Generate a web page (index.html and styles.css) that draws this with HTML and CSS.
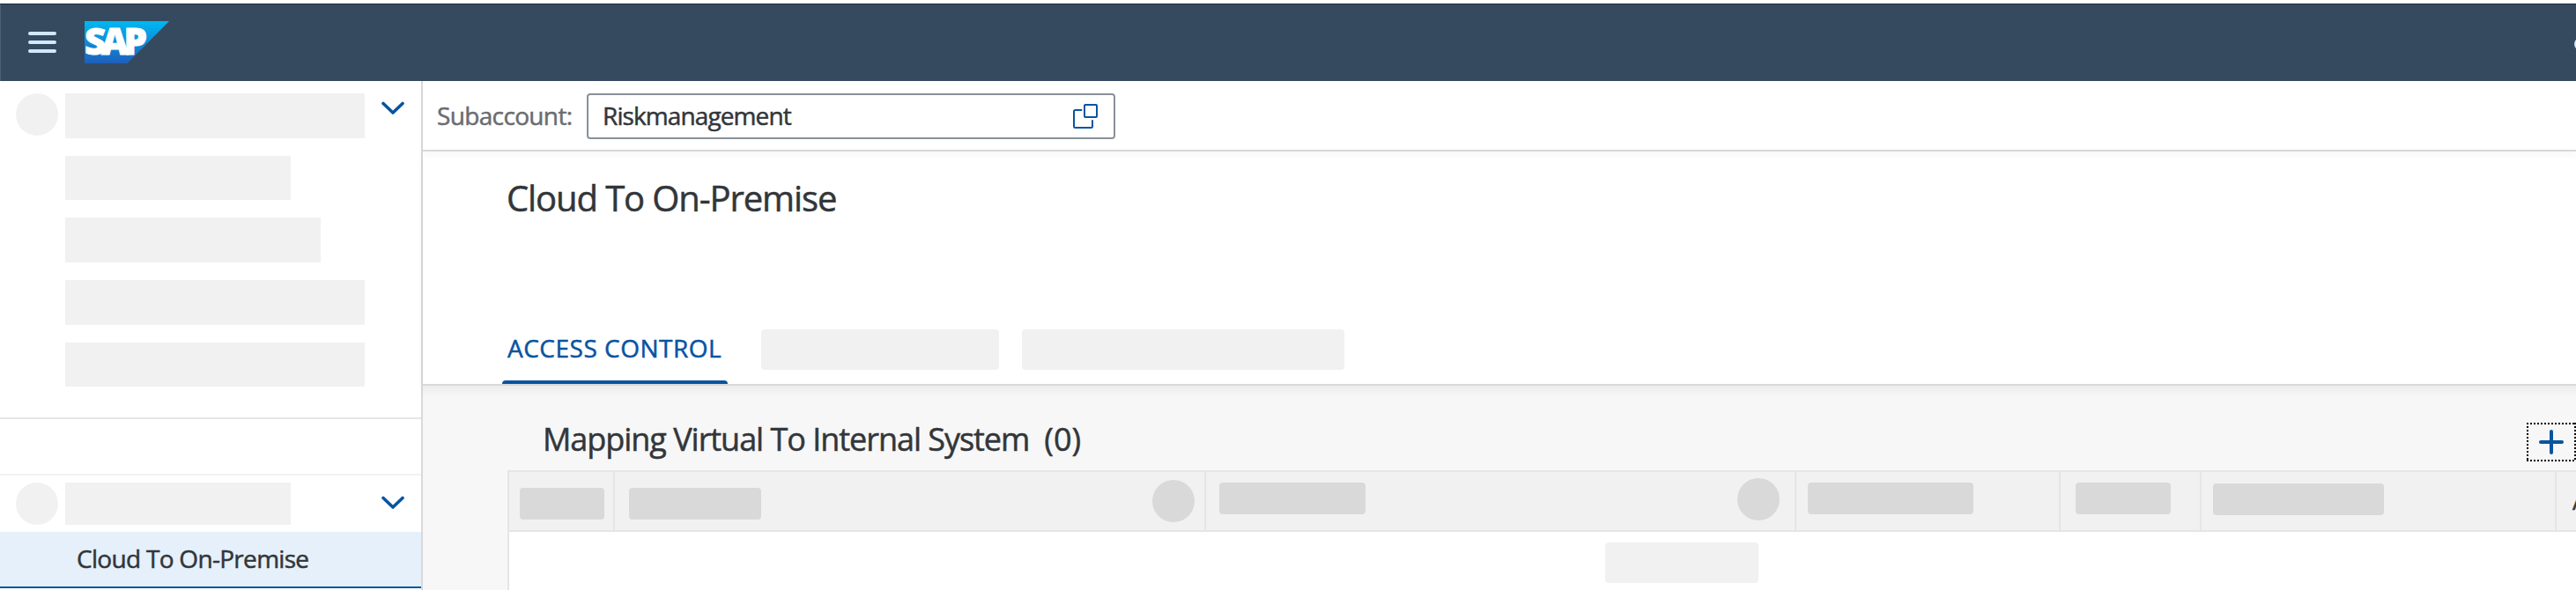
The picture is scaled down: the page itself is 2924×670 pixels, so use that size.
FILE: index.html
```html
<!DOCTYPE html>
<html lang="en">
<head>
<meta charset="utf-8">
<title>Cloud To On-Premise</title>
<link rel="stylesheet" href="styles.css">
</head>
<body>
<div class="app">
  <header class="shell">
    <svg class="menu" width="32" height="24" viewBox="0 0 32 24"><path d="M2 2H30M2 12H30M2 22H30" stroke="#d1e8ff" stroke-width="4" stroke-linecap="round"/></svg>
    <svg class="logo" width="96" height="48" viewBox="0 0 96 48">
      <defs><linearGradient id="sap" x1="0" y1="0" x2="0" y2="1"><stop offset="0" stop-color="#00b8f1"/><stop offset=".5" stop-color="#0d8ddb"/><stop offset="1" stop-color="#1e5fbb"/></linearGradient></defs>
      <path d="M0 0H96L48.500 48H0Z" fill="url(#sap)"/>
      <text class="logo-text" x="0" y="38" textLength="71" lengthAdjust="spacing">SAP</text>
    </svg>
    <span class="shell-action"></span>
  </header>
  <div class="body">
    <nav class="side">
      <div class="group">
        <span class="dot"></span>
        <div class="bars"><i class="bar w340"></i><i class="bar w256"></i><i class="bar w290"></i><i class="bar w340"></i><i class="bar w340"></i></div>
        <svg class="chev chev-top" width="26" height="16" viewBox="0 0 26 16"><path d="M2 2.500L13 13L24 2.500" fill="none" stroke="#0854a0" stroke-width="3.600" stroke-linecap="round" stroke-linejoin="round"/></svg>
      </div>
      <div class="gap"></div>
      <div class="group second">
        <span class="dot"></span>
        <div class="bars"><i class="bar short w256"></i></div>
        <svg class="chev chev-low" width="26" height="16" viewBox="0 0 26 16"><path d="M2 2.500L13 13L24 2.500" fill="none" stroke="#0854a0" stroke-width="3.600" stroke-linecap="round" stroke-linejoin="round"/></svg>
      </div>
      <div class="selected">Cloud To On-Premise</div>
    </nav>
    <main class="main">
      <div class="subbar">
        <label class="label">Subaccount:</label>
        <div class="input"><span class="value">Riskmanagement</span>
          <svg width="30" height="30" viewBox="0 0 30 30" fill="none" stroke="#0854a0" stroke-width="2" stroke-linecap="round"><rect x="14" y="2" width="14" height="14" rx="1"/><path d="M10.500 8H3.500Q2 8 2 9.500V26.500Q2 28 3.500 28H21.500Q23 28 23 26.500V20"/></svg>
        </div>
      </div>
      <div class="head">
        <h1 class="title">Cloud To On-Premise</h1>
        <div class="tabs"><div class="tab">ACCESS CONTROL</div><i class="ph tab-a"></i><i class="ph tab-b"></i></div>
      </div>
      <section class="content">
        <div class="toolbar">
          <h2 class="heading"><span>Mapping Virtual To Internal System</span><span class="count">(0)</span></h2>
          <svg class="add" width="56" height="44" viewBox="0 0 56 44"><path d="M0 1H56M0 43H56M1 0V44M55 0V44" stroke="#000" stroke-width="2" stroke-dasharray="2 2" shape-rendering="crispEdges"/><path d="M16 22H40M28 10V34" stroke="#0854a0" stroke-width="4" stroke-linecap="round"/></svg>
        </div>
        <div class="table">
          <div class="row">
            <div class="cell c1"><i class="ph dark w96"></i></div>
            <div class="cell c2"><i class="ph dark w150"></i><i class="round"></i></div>
            <div class="cell c3"><i class="ph dark w166"></i><i class="round up"></i></div>
            <div class="cell c4"><i class="ph dark w188"></i></div>
            <div class="cell c5"><i class="ph dark w108"></i></div>
            <div class="cell c6"><i class="ph dark w194"></i></div>
            <div class="cell c7">A</div>
          </div>
          <div class="empty"><i class="ph w174"></i></div>
        </div>
      </section>
    </main>
  </div>
</div>
</body>
</html>
```
FILE: styles.css
```css
* { box-sizing: border-box; }
body { margin: 0; background: #fff; color: #32363a; font: 28px "Open Sans", sans-serif; -webkit-text-stroke: .5px; overflow: hidden; }
i { display: block; }
svg { display: block; flex: none; }
.app { display: flex; flex-direction: column; width: 2924px; height: 670px; overflow: hidden; padding-top: 4px; }

.shell { display: flex; flex: none; height: 88px; padding: 20px 0 0 32px; background: #354a5f; border-top: 1px solid #1b2d42; box-shadow: inset 1px 0 #4a6079; }
.menu { margin-top: 11px; }
.logo { margin: -1px 0 0 32px; overflow: visible; }
.logo-text { font: 800 42px "Open Sans", sans-serif; fill: #fff; stroke: #fff; stroke-width: 1px; }
.shell-action { width: 14px; height: 14px; margin: 18px -12px 0 auto; border-radius: 50%; background: #d1e8ff; }

.body { display: flex; flex: 1; min-height: 0; }
.side { flex: none; width: 480px; border-right: 2px solid #d9d9d9; }
.group { display: flex; height: 384px; padding: 14px 0 0 18px; border-bottom: 2px solid #e5e5e5; }
.dot { width: 48px; height: 48px; border-radius: 50%; background: #f1f1f1; }
.bars { display: flex; flex-direction: column; width: 359px; margin-left: 8px; gap: 20px; }
.bar { height: 50.7px; background: #f1f1f1; }
.short { height: 48px; }
.w340 { width: 340px; }
.w256 { width: 256px; }
.w290 { width: 290px; }
.chev-top { margin-top: 9px; }
.chev-low { margin-top: 15px; }
.gap { height: 64px; border-bottom: 2px solid #f2f2f2; }
.second { height: 64px; padding-top: 8px; border: 0; }
.selected { height: 64px; padding-left: 87px; border-bottom: 2px solid #0854a0; background: #e5f0fa; line-height: 60px; letter-spacing: -.7px; }

.main { flex: 1; min-width: 0; display: flex; flex-direction: column; }
.subbar { display: flex; flex: none; align-items: center; height: 80px; padding-left: 16px; border-bottom: 2px solid #d9d9d9; box-shadow: 0 4px 8px #00000009; }
.label { width: 170px; color: #6a6d70; letter-spacing: -.65px; line-height: 52px; }
.input { display: flex; justify-content: space-between; align-items: center; width: 600px; height: 52px; margin-top: 2px; padding: 0 17px 0 16px; border: 2px solid #89919a; border-radius: 4px; letter-spacing: -.9px; line-height: 46px; }
.value { padding-bottom: 2px; }
.head { display: flex; flex-direction: column; flex: none; height: 266px; padding: 28px 0 0 90px; border-bottom: 2px solid #d9d9d9; box-shadow: 0 4px 8px #0000000f; }
.title { margin: 0 0 0 5px; font-size: 40px; font-weight: 400; line-height: 50px; letter-spacing: -1.100px; }
.tabs { display: flex; margin-top: auto; height: 80px; }
.tab { width: 256px; margin-right: 38px; padding-left: 6px; color: #0854a0; line-height: 78px; letter-spacing: .5px; white-space: nowrap; }
.tab::after { content: ""; display: block; height: 4px; margin: -2px 0 0 -6px; border-radius: 4px 4px 0 0; background: #0854a0; }
.ph { border-radius: 4px; background: #f1f1f1; }
.tab-a { width: 270px; height: 46px; margin: 18px 26px 0 0; }
.tab-b { width: 366px; height: 46px; margin-top: 18px; }

.content { flex: 1; display: flex; flex-direction: column; padding-left: 96px; background: linear-gradient(#ececec, #f7f7f7 12px); }
.toolbar { display: flex; justify-content: space-between; flex: none; height: 96px; padding: 42px 0 0 40px; }
.heading { display: flex; gap: 17px; margin: -4px 0 0; font-size: 36px; font-weight: 400; line-height: 46px; letter-spacing: -1.040px; }
.count { letter-spacing: 0; }
.table { flex: 1; border: 2px solid #e5e5e5; border-width: 2px 0 0 2px; background: #fff; }
.row { display: flex; height: 68px; border-bottom: 2px solid #e5e5e5; background: #f1f1f1; }
.cell { display: flex; flex: none; padding: 12px 0 0 16px; border-right: 2px solid #e5e5e5; }
.c1 { width: 120px; padding: 18px 0 0 12px; }
.c2 { width: 671px; padding-top: 18px; }
.c3 { width: 670px; padding-left: 15px; }
.c4 { width: 300px; padding-left: 13px; }
.c5 { width: 160px; padding-left: 17px; }
.c6 { width: 403px; padding: 13px 0 0 13px; }
.c7 { width: 60px; padding: 0 0 0 18px; line-height: 65px; }
.dark { height: 36px; background: #d9d9d9; }
.w96 { width: 96px; }
.w150 { width: 150px; }
.w166 { width: 166px; }
.w188 { width: 188px; }
.w108 { width: 108px; }
.w194 { width: 194px; }
.round { width: 48px; height: 48px; margin: -9px 11px 0 auto; border-radius: 50%; background: #d9d9d9; }
.up { margin: -5px 17px 0 auto; }
.empty { padding: 12px 0 0 1244px; }
.w174 { width: 174px; height: 46px; }
```
